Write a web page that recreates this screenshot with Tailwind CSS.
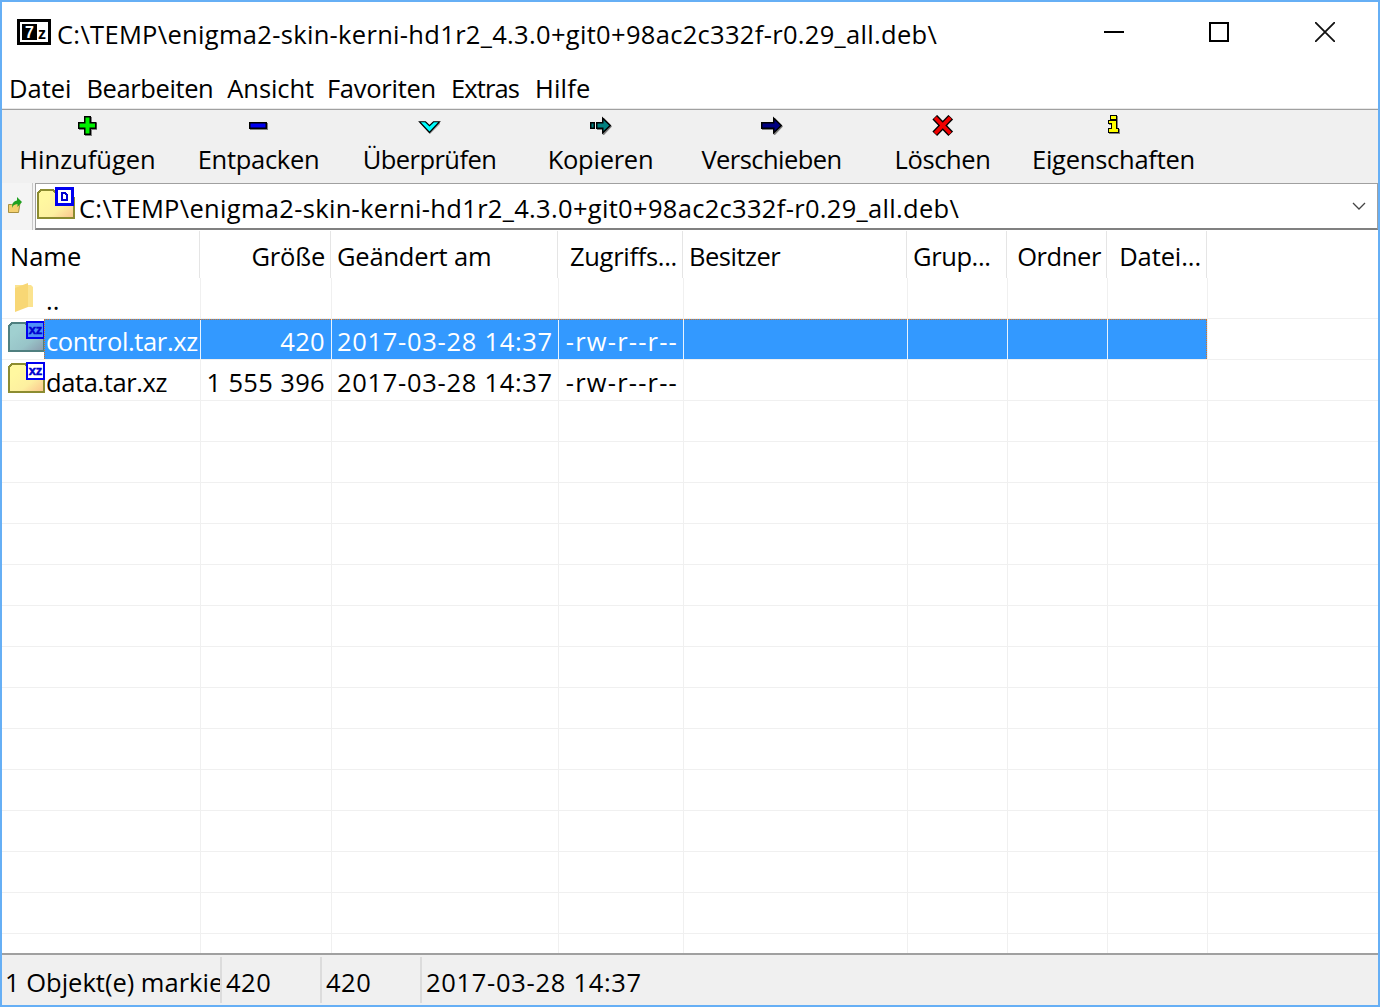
<!DOCTYPE html>
<html lang="de">
<head>
<meta charset="utf-8">
<title>7-Zip</title>
<script src="https://cdn.jsdelivr.net/npm/@tailwindcss/browser@4"></script>
</head>
<body class="m-0 bg-white overflow-hidden">
<div class="w-[1380px] h-[1007px] border-2 border-[#66aff5] bg-white flex flex-col font-['Open_Sans',sans-serif] text-[25.5px] leading-[34px] text-black overflow-hidden">

  <svg width="0" height="0" class="absolute">
    <defs>
      <linearGradient id="yel" x1="0.2" y1="0.3" x2="0.9" y2="1">
        <stop offset="0" stop-color="#fff8a0"/><stop offset="0.55" stop-color="#fdf0a0"/><stop offset="1" stop-color="#fbc890"/>
      </linearGradient>
      <linearGradient id="tea" x1="0.2" y1="0.3" x2="0.9" y2="1">
        <stop offset="0" stop-color="#a0d0d0"/><stop offset="0.55" stop-color="#98c4c8"/><stop offset="1" stop-color="#8ca0b0"/>
      </linearGradient>
    </defs>
  </svg>

  <!-- title bar -->
  <div class="h-[64px] shrink-0 flex items-center relative">
    <svg class="ml-[15px] mt-[-4px] shrink-0" width="34" height="26" viewBox="0 0 34 26" shape-rendering="crispEdges">
      <rect x="0" y="0" width="34" height="26" fill="#000"/>
      <rect x="3" y="3" width="28" height="20" fill="#fff"/>
      <rect x="5" y="5" width="15" height="16" fill="#000"/>
      <text x="8" y="19" font-family="Liberation Sans" font-weight="700" font-size="16" fill="#fff">7</text>
      <text x="21" y="20" font-family="Liberation Sans" font-weight="700" font-size="16" fill="#000">z</text>
    </svg>
    <span class="ml-[6px] whitespace-nowrap tracking-[0.31px]">C:\TEMP\enigma2-skin-kerni-hd1r2_4.3.0+git0+98ac2c332f-r0.29_all.deb\</span>
    <div class="absolute left-[1102px] top-[29px] w-[20px] h-[2px] bg-black"></div>
    <div class="absolute left-[1207px] top-[20px] w-[20px] h-[20px] border-2 border-black"></div>
    <svg class="absolute left-[1313px] top-[20px]" width="20" height="20" viewBox="0 0 20 20"><path d="M0 0L20 20M20 0L0 20" stroke="#111" stroke-width="1.8"/></svg>
  </div>

  <!-- menu -->
  <div class="h-[44px] shrink-0 flex items-center pl-[7px] pt-[1px] gap-[14px] border-b border-[#a0a0a0] shadow-[inset_0_-1px_0_#e8e8e8]">
    <span class="mr-[1px]">Datei</span><span class="tracking-[-0.4px]">Bearbeiten</span><span class="tracking-[-0.1px]">Ansicht</span><span class="ml-[-1px] tracking-[-0.25px]">Favoriten</span><span class="ml-[1px] tracking-[-0.9px]">Extras</span><span class="ml-[2px] tracking-[0.2px]">Hilfe</span>
  </div>

  <!-- toolbar -->
  <div class="h-[73px] shrink-0 bg-[#f0f0f0] flex">
    <div class="w-[171px] flex flex-col items-center">
      <svg class="mt-[5px]" width="25" height="22" viewBox="0 0 25 22">
        <path d="M10 2h7v6h5v7h-5v6h-7v-6H4V8h6z" fill="#808080" shape-rendering="crispEdges"/>
        <path d="M9.75 1.75h5.5v6h5.5v5.5h-5.5v6h-5.5v-6h-6v-5.5h6z" fill="#00f000" stroke="#000" stroke-width="1.5"/>
      </svg>
      <span class="mt-[5px]">Hinzufügen</span>
    </div>
    <div class="w-[171px] flex flex-col items-center">
      <svg class="mt-[5px]" width="25" height="22" viewBox="0 0 25 22">
        <rect x="4" y="8" width="18" height="7" fill="#808080"/>
        <rect x="3.75" y="7.75" width="16.5" height="5.5" fill="#0000f0" stroke="#000" stroke-width="1.5"/>
      </svg>
      <span class="mt-[5px] tracking-[-0.3px]">Entpacken</span>
    </div>
    <div class="w-[171px] flex flex-col items-center">
      <svg class="mt-[5px]" width="25" height="22" viewBox="0 0 25 22">
        <path d="M3 8h6l4 4 4-4h6v1L13 19z" fill="#a0a0a0"/>
        <path d="M2.5 6.75h6L12.5 10.75l4-4h6L12.5 17.5z" fill="#00ffff" stroke="#000" stroke-width="1.2"/>
      </svg>
      <span class="mt-[5px] tracking-[-0.55px]">Überprüfen</span>
    </div>
    <div class="w-[171px] flex flex-col items-center">
      <svg class="mt-[5px]" width="25" height="22" viewBox="0 0 25 22">
        <path d="M9 8h6V3h1l8 8.5-8 8.5h-1v-5H9z" fill="#808080"/>
        <rect x="2.75" y="7.75" width="3.5" height="5.5" fill="#008080" stroke="#000" stroke-width="1.5"/>
        <path d="M8.75 7.75h6v-4.5l7.5 7.25-7.5 7.25v-4.5h-6z" fill="#008080" stroke="#000" stroke-width="1.5"/>
      </svg>
      <span class="mt-[5px] tracking-[-0.25px]">Kopieren</span>
    </div>
    <div class="w-[171px] flex flex-col items-center">
      <svg class="mt-[5px]" width="25" height="22" viewBox="0 0 25 22">
        <path d="M3 8h12V3h1l8 8.5-8 8.5h-1v-5H3z" fill="#808080"/>
        <path d="M2.75 7.75h12v-4.5l7.5 7.25-7.5 7.25v-4.5h-12z" fill="#000080" stroke="#000" stroke-width="1.5"/>
      </svg>
      <span class="mt-[5px] tracking-[-0.55px]">Verschieben</span>
    </div>
    <div class="w-[171px] flex flex-col items-center">
      <svg class="mt-[5px]" width="25" height="22" viewBox="0 0 25 22">
        <path d="M7 4.5L18.5 16.5M18.5 4.5L7 16.5" stroke="#000" stroke-width="6.5" stroke-linecap="square"/>
        <path d="M6.5 4L19 17M19 4L6.5 17" stroke="#f00000" stroke-width="3.8" stroke-linecap="square"/>
      </svg>
      <span class="mt-[5px] tracking-[-0.4px]">Löschen</span>
    </div>
    <div class="w-[171px] flex flex-col items-center">
      <svg class="mt-[5px]" width="25" height="22" viewBox="0 0 25 22" shape-rendering="crispEdges">
        <path d="M10 1h7v5h-7zM8 6h9v8h2v5H8v-5h2v-4H8z" fill="#808080"/>
        <path d="M9 0h7v5H9zM7 5h9v8h2v5H7v-5h3V9H7z" fill="#000"/>
        <path d="M10 1h5v3h-5zM8 6h7v8h2v3H8v-3h3V8H8z" fill="#ffff00"/>
      </svg>
      <span class="mt-[5px] tracking-[-0.25px]">Eigenschaften</span>
    </div>
  </div>

  <!-- address bar -->
  <div class="h-[47px] shrink-0 flex bg-[#f4f4f4]">
    <div class="w-[31px] shrink-0 border-r border-[#c8c8c8] flex items-center justify-center">
      <svg width="16" height="18" viewBox="0 0 16 18" class="mr-[5px] mt-[-3px]">
        <path d="M1.5 8.5h3l8.5-1.5-1.5 9.5h-10z" fill="#f4d070" stroke="#a89040"/>
        <path d="M5 12c0-5 2-7 5-7.5V1l5 5-4.5 5V8c-2.500 0-4.500 1-5.500 4z" fill="#20a020"/>
      </svg>
    </div>
    <div class="flex-1 ml-[2px] border-l border-t border-r border-[#a0a0a0] border-b-2 border-b-[#808080] bg-white flex items-center relative">
      <svg class="ml-[1px] shrink-0 self-start mt-[3px]" width="38" height="34" viewBox="0 0 38 34" shape-rendering="crispEdges">
        <path d="M1 31V6l3-3h12l3 3v5h18v20z" fill="url(#yel)" stroke="#8c8c30" stroke-width="1.5"/>
        <rect x="19.500" y="1.500" width="16" height="16" fill="#fff" stroke="#0000f0" stroke-width="3"/>
        <path d="M24 5h4l3 3v6h-7zM26 7v5h3V9l-1-2z" fill="#0000d0" fill-rule="evenodd"/>
      </svg>
      <span class="ml-[4px] mt-[4px] whitespace-nowrap tracking-[0.31px]">C:\TEMP\enigma2-skin-kerni-hd1r2_4.3.0+git0+98ac2c332f-r0.29_all.deb\</span>
      <svg class="absolute right-[11px] top-[18px]" width="14" height="9" viewBox="0 0 14 9"><path d="M1 1l6 6 6-6" fill="none" stroke="#444" stroke-width="1.3"/></svg>
    </div>
  </div>

  <!-- list -->
  <div class="flex-1 min-h-0 overflow-hidden mt-[1px]" id="list">
    <div class="grid grid-cols-[198px_131px_227px_125px_224px_100px_100px_100px_1fr] h-[47px] items-stretch">
      <div class="pl-[8px] pt-[8px] border-r border-[#e5e5e5]">Name</div>
      <div class="pr-[5px] pt-[8px] text-right border-r border-[#e5e5e5] tracking-[-0.2px]">Größe</div>
      <div class="pl-[6px] pt-[8px] border-r border-[#e5e5e5] tracking-[-0.2px]">Geändert am</div>
      <div class="pr-[5px] pt-[8px] text-right border-r border-[#e5e5e5] tracking-[-0.3px]">Zugriffs...</div>
      <div class="pl-[6px] pt-[8px] border-r border-[#e5e5e5] tracking-[-0.5px]">Besitzer</div>
      <div class="pl-[6px] pt-[8px] border-r border-[#e5e5e5] tracking-[-0.4px]">Grup...</div>
      <div class="pr-[5px] pt-[8px] text-right border-r border-[#e5e5e5] tracking-[-0.4px]">Ordner</div>
      <div class="pr-[5px] pt-[8px] text-right border-r border-[#e5e5e5] tracking-[-0.1px]">Datei...</div>
      <div></div>
    </div>
    <!-- parent row -->
    <div class="grid grid-cols-[199px_131px_227px_125px_224px_100px_100px_100px_1fr] h-[41px] border-b border-[#f0f0f0]">
      <div class="border-r border-[#f0f0f0] flex relative">
        <svg class="absolute left-[10px] top-[3px]" width="24" height="32" viewBox="0 0 24 32">
          <path d="M3 4h16l2 2v20H3z" fill="#fbe38f"/>
          <path d="M3 7l13-5v24L3 31z" fill="#f8d775"/>
        </svg>
        <span class="absolute left-[44px] top-[5px]">..</span>
      </div>
      <div class="border-r border-[#f0f0f0]"></div><div class="border-r border-[#f0f0f0]"></div><div class="border-r border-[#f0f0f0]"></div><div class="border-r border-[#f0f0f0]"></div><div class="border-r border-[#f0f0f0]"></div><div class="border-r border-[#f0f0f0]"></div><div class="border-r border-[#f0f0f0]"></div><div></div>
    </div>
    <!-- selected row -->
    <div class="grid grid-cols-[199px_131px_227px_125px_224px_100px_100px_100px_1fr] h-[41px] border-b border-[#f0f0f0] relative">
      <div class="relative border-r border-[#e8f3ff]">
        <svg class="absolute left-[6px] top-[2px]" width="37" height="32" viewBox="0 0 37 32" shape-rendering="crispEdges">
          <path d="M1 30V5l3-3h13l2 3h17v25z" fill="url(#tea)" stroke="#4f7f7f" stroke-width="1.5"/>
          <rect x="19" y="1" width="17" height="16" fill="#4f8ff8" stroke="#0000f0" stroke-width="2"/>
          <text x="27.5" y="13" text-anchor="middle" font-family="Liberation Sans" font-weight="700" font-size="13" fill="#0000d0" stroke="#0000d0" stroke-width="0.5">xz</text>
        </svg>
        <div class="absolute left-[42px] right-0 top-0 bottom-0 bg-[#3399ff] text-white pl-[2px] pt-[5px] whitespace-nowrap overflow-hidden tracking-[-0.36px]">control.tar.xz</div>
      </div>
      <div class="bg-[#3399ff] text-white text-right pr-[6px] pt-[5px] border-r border-[#e8f3ff] tracking-[0.3px]">420</div>
      <div class="bg-[#3399ff] text-white pl-[5px] pt-[5px] border-r border-[#e8f3ff] whitespace-nowrap tracking-[0.7px]">2017-03-28 14:37</div>
      <div class="bg-[#3399ff] text-white text-right pr-[5px] pt-[5px] border-r border-[#e8f3ff] whitespace-nowrap tracking-[1.2px]">-rw-r--r--</div>
      <div class="bg-[#3399ff] border-r border-[#e8f3ff]"></div>
      <div class="bg-[#3399ff] border-r border-[#e8f3ff]"></div>
      <div class="bg-[#3399ff] border-r border-[#e8f3ff]"></div>
      <div class="bg-[#3399ff] bg-clip-padding border-r border-[#f0f0f0]"></div>
      <div></div>
      <div class="absolute left-[42px] top-0 bottom-0 w-[1163px] border border-b-0 border-dotted border-[#d8721c] pointer-events-none"></div>
    </div>
    <!-- data row -->
    <div class="grid grid-cols-[199px_131px_227px_125px_224px_100px_100px_100px_1fr] h-[41px] border-b border-[#f0f0f0]">
      <div class="relative border-r border-[#f0f0f0]">
        <svg class="absolute left-[6px] top-[2px]" width="37" height="32" viewBox="0 0 37 32" shape-rendering="crispEdges">
          <path d="M1 30V5l3-3h13l2 3h17v25z" fill="url(#yel)" stroke="#8c8c30" stroke-width="1.5"/>
          <rect x="19" y="1" width="17" height="16" fill="#fff" stroke="#0000f0" stroke-width="2"/>
          <text x="27.5" y="13" text-anchor="middle" font-family="Liberation Sans" font-weight="700" font-size="13" fill="#0000d0" stroke="#0000d0" stroke-width="0.5">xz</text>
        </svg>
        <span class="absolute left-[44px] top-[5px] whitespace-nowrap tracking-[-0.4px]">data.tar.xz</span>
      </div>
      <div class="text-right pr-[6px] pt-[5px] border-r border-[#f0f0f0] whitespace-nowrap tracking-[0.35px]">1 555 396</div>
      <div class="pl-[5px] pt-[5px] border-r border-[#f0f0f0] whitespace-nowrap tracking-[0.7px]">2017-03-28 14:37</div>
      <div class="text-right pr-[5px] pt-[5px] border-r border-[#f0f0f0] whitespace-nowrap tracking-[1.2px]">-rw-r--r--</div>
      <div class="border-r border-[#f0f0f0]"></div><div class="border-r border-[#f0f0f0]"></div><div class="border-r border-[#f0f0f0]"></div><div class="border-r border-[#f0f0f0]"></div><div></div>
    </div>
    <template id="empty">
      <div class="grid grid-cols-[199px_131px_227px_125px_224px_100px_100px_100px_1fr] h-[41px] border-b border-[#f0f0f0]">
        <div class="border-r border-[#f0f0f0]"></div><div class="border-r border-[#f0f0f0]"></div><div class="border-r border-[#f0f0f0]"></div><div class="border-r border-[#f0f0f0]"></div><div class="border-r border-[#f0f0f0]"></div><div class="border-r border-[#f0f0f0]"></div><div class="border-r border-[#f0f0f0]"></div><div class="border-r border-[#f0f0f0]"></div><div></div>
      </div>
    </template>
  </div>
  <script>
    var t = document.getElementById('empty'), l = document.getElementById('list');
    for (var i = 0; i < 14; i++) l.appendChild(t.content.cloneNode(true));
  </script>

  <!-- status -->
  <div class="h-[52px] shrink-0 bg-[#f0f0f0] border-t-2 border-[#a0a0a0] flex items-stretch">
    <div class="w-[220px] pl-[3px] pt-[8px] border-r-2 border-[#dcdcdc] my-[2px] whitespace-nowrap overflow-hidden">1 Objekt(e) markiert</div>
    <div class="w-[100px] pl-[4px] pt-[8px] border-r-2 border-[#dcdcdc] my-[2px] tracking-[0.5px]">420</div>
    <div class="w-[100px] pl-[4px] pt-[8px] border-r-2 border-[#dcdcdc] my-[2px] tracking-[0.5px]">420</div>
    <div class="pl-[4px] pt-[8px] my-[2px] tracking-[0.7px]">2017-03-28 14:37</div>
  </div>
</div>
</body>
</html>
